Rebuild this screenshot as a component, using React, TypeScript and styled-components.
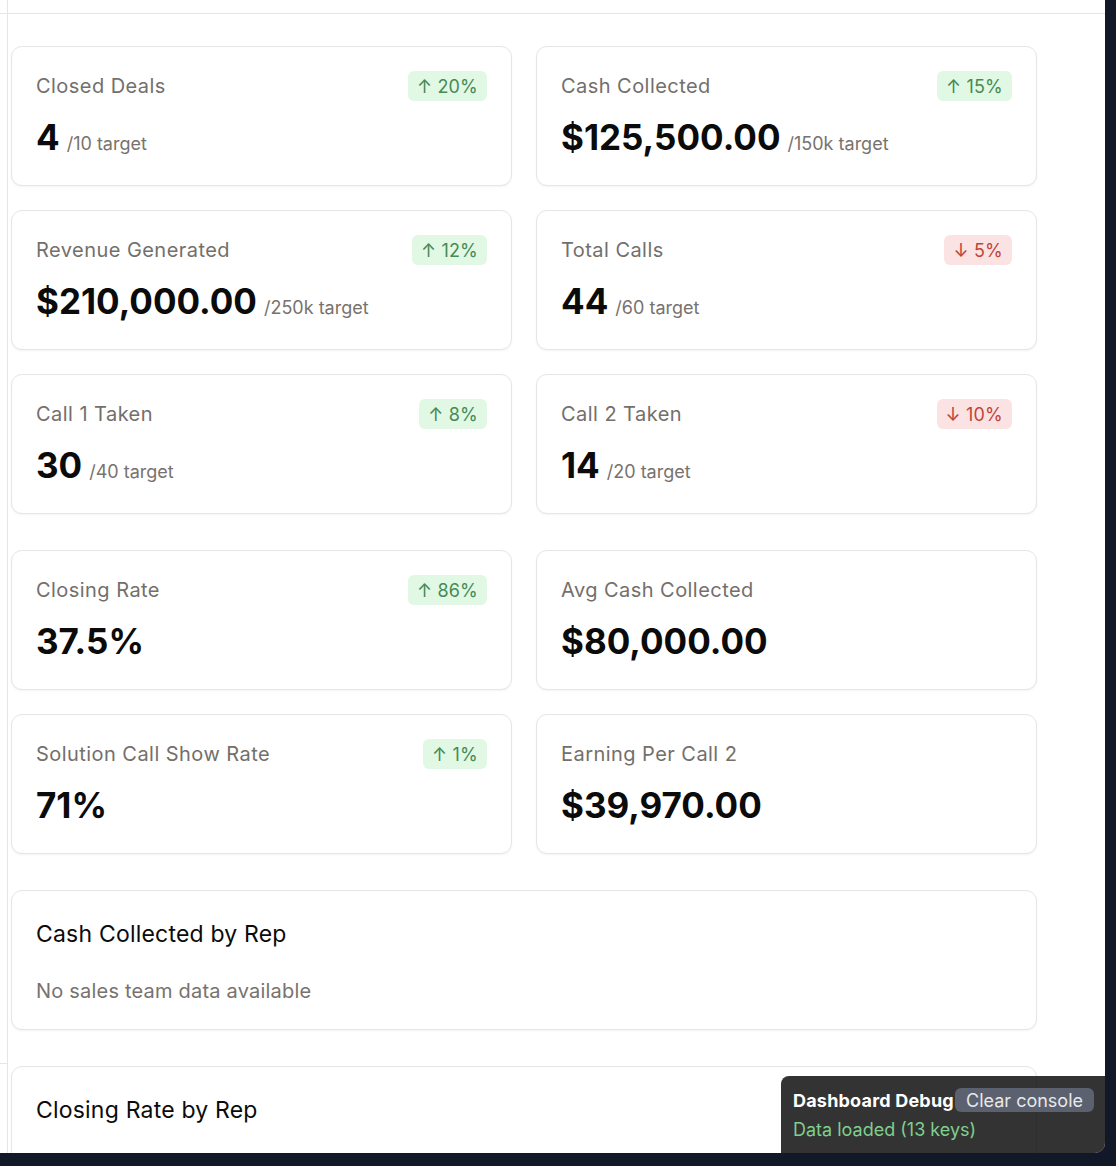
import React from "react";
import styled, { createGlobalStyle } from "styled-components";

const GlobalStyle = createGlobalStyle`
  html, body {
    margin: 0;
    padding: 0;
    background: #111827;
  }
  body {
    font-family: Inter, "Noto Sans", "Liberation Sans", sans-serif;
    -webkit-font-smoothing: antialiased;
  }
  * { box-sizing: border-box; }
`;

const Frame = styled.div`
  position: relative;
  width: 1105px;
  height: 1153px;
  background: #ffffff;
  border-bottom-right-radius: 10px;
  overflow: hidden;
  display: flex;
`;

const Sidebar = styled.aside`
  width: 8px;
  flex-shrink: 0;
  border-right: 1px solid #e6e6e6;
  display: flex;
  flex-direction: column;
`;

const SideTop = styled.div`
  height: 14px;
  border-bottom: 1px solid #e6e6e6;
`;

const SideBlock = styled.div`
  height: 1050px;
  border-bottom: 1px solid #e6e6e6;
`;

const Main = styled.main`
  flex: 1;
  display: flex;
  flex-direction: column;
`;

const TopBar = styled.div`
  height: 14px;
  border-bottom: 1px solid #e6e6e6;
  flex-shrink: 0;
`;

const Content = styled.div`
  padding: 32px 0 0 3px;
  display: flex;
  flex-direction: column;
  gap: 36px;
`;

const Grid = styled.div`
  display: grid;
  grid-template-columns: 501px 501px;
  gap: 24px;
`;

const Card = styled.div`
  background: #ffffff;
  border: 1px solid #e6e6e6;
  border-radius: 11px;
  box-shadow: 0 1px 2px rgba(0, 0, 0, 0.05);
  padding: 24px;
`;

const StatCard = styled(Card)`
  height: 140px;
`;

const WideCard = styled(Card)`
  width: 1026px;
  height: 140px;
`;

const CardHeader = styled.div`
  display: flex;
  justify-content: space-between;
  align-items: center;
  height: 30px;
`;

const Title = styled.div`
  font-size: 20px;
  color: #736f6b;
  font-weight: 400;
  letter-spacing: 0.45px;
`;

const Badge = styled.span<{ $down?: boolean }>`
  display: inline-flex;
  align-items: center;
  gap: 5px;
  height: 30px;
  padding: 0 9px;
  border-radius: 6px;
  font-size: 18px;
  letter-spacing: 0.2px;
  background: ${(p) => (p.$down ? "#fbe3e3" : "#e1f8e5")};
  color: ${(p) => (p.$down ? "#c0443c" : "#468a55")};
`;

const ValueRow = styled.div`
  display: flex;
  align-items: baseline;
  gap: 7px;
  margin-top: 14px;
`;

const Value = styled.span`
  font-size: 35px;
  line-height: 44px;
  font-weight: 700;
  color: #0b0b0b;
`;

const Target = styled.span`
  font-size: 18px;
  color: #78726e;
`;

const ChartTitle = styled.div`
  font-size: 23px;
  line-height: 38px;
  letter-spacing: 0.2px;
  color: #0b0b0b;
`;

const EmptyText = styled.div`
  font-size: 20px;
  line-height: 28px;
  letter-spacing: 0.2px;
  color: #78726e;
  margin-top: 24px;
`;

const DebugPanel = styled.div`
  position: absolute;
  left: 781px;
  top: 1076px;
  right: 0;
  bottom: 0;
  background: rgba(0, 0, 0, 0.8);
  border-top-left-radius: 8px;
  padding: 12px 11px 12px 12px;
  display: flex;
  flex-direction: column;
  gap: 6px;
`;

const DebugRow = styled.div`
  display: flex;
  align-items: center;
  justify-content: space-between;
`;

const DebugTitle = styled.span`
  font-size: 18px;
  font-weight: 700;
  letter-spacing: 0.2px;
  color: #ffffff;
`;

const ClearButton = styled.button`
  font-family: inherit;
  font-size: 18px;
  color: #e8e8ea;
  background: #5b616e;
  border: none;
  border-radius: 6px;
  height: 24px;
  padding: 0 11px;
`;

const DebugLine = styled.div`
  font-size: 18px;
  line-height: 24px;
  color: #7fcf8d;
`;

type Stat = {
  title: string;
  value: string;
  target?: string;
  change?: string;
  down?: boolean;
};

const group1: Stat[] = [
  { title: "Closed Deals", value: "4", target: "/10 target", change: "20%" },
  { title: "Cash Collected", value: "$125,500.00", target: "/150k target", change: "15%" },
  { title: "Revenue Generated", value: "$210,000.00", target: "/250k target", change: "12%" },
  { title: "Total Calls", value: "44", target: "/60 target", change: "5%", down: true },
  { title: "Call 1 Taken", value: "30", target: "/40 target", change: "8%" },
  { title: "Call 2 Taken", value: "14", target: "/20 target", change: "10%", down: true },
];

const group2: Stat[] = [
  { title: "Closing Rate", value: "37.5%", change: "86%" },
  { title: "Avg Cash Collected", value: "$80,000.00" },
  { title: "Solution Call Show Rate", value: "71%", change: "1%" },
  { title: "Earning Per Call 2", value: "$39,970.00" },
];

function StatTile({ s }: { s: Stat }) {
  return (
    <StatCard>
      <CardHeader>
        <Title>{s.title}</Title>
        {s.change && (
          <Badge $down={s.down}>
            {s.down ? "↓" : "↑"} {s.change}
          </Badge>
        )}
      </CardHeader>
      <ValueRow>
        <Value>{s.value}</Value>
        {s.target && <Target>{s.target}</Target>}
      </ValueRow>
    </StatCard>
  );
}

export default function App() {
  return (
    <>
      <GlobalStyle />
      <Frame>
        <Sidebar>
          <SideTop />
          <SideBlock />
        </Sidebar>
        <Main>
          <TopBar />
          <Content>
            <Grid>
              {group1.map((s) => (
                <StatTile key={s.title} s={s} />
              ))}
            </Grid>
            <Grid>
              {group2.map((s) => (
                <StatTile key={s.title} s={s} />
              ))}
            </Grid>
            <WideCard>
              <ChartTitle>Cash Collected by Rep</ChartTitle>
              <EmptyText>No sales team data available</EmptyText>
            </WideCard>
            <WideCard>
              <ChartTitle>Closing Rate by Rep</ChartTitle>
            </WideCard>
          </Content>
        </Main>
        <DebugPanel>
          <DebugRow>
            <DebugTitle>Dashboard Debug</DebugTitle>
            <ClearButton>Clear console</ClearButton>
          </DebugRow>
          <DebugLine>Data loaded (13 keys)</DebugLine>
        </DebugPanel>
      </Frame>
    </>
  );
}
